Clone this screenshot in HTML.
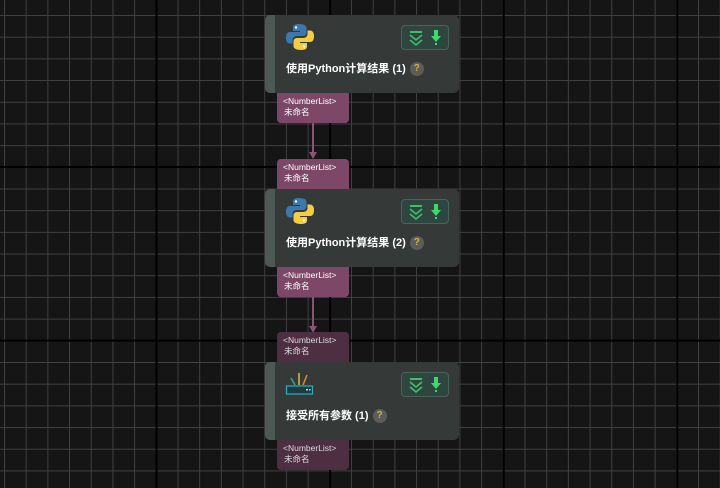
<!DOCTYPE html>
<html><head><meta charset="utf-8"><style>
html,body{margin:0;padding:0}
body{width:720px;height:488px;overflow:hidden;position:relative;background-color:#151515;
background-image:
linear-gradient(to right,#000 0,#000 2px,transparent 2px),
linear-gradient(to bottom,#000 0,#000 2px,transparent 2px),
linear-gradient(to right,#404040 0,#404040 1px,transparent 1px),
linear-gradient(to bottom,#404040 0,#404040 1px,transparent 1px);
background-size:173.6px 173.6px,173.6px 173.6px,21.7px 21.7px,21.7px 21.7px;
background-position:155.5px 0,0 166px,4px 0,0 15px;
font-family:"Liberation Sans","Noto Sans CJK SC",sans-serif;}
.node{position:absolute;left:265px;width:194px;height:78px;background:#353a39;border-radius:5px;overflow:hidden}
.node .strip{position:absolute;left:0;top:0;width:10px;height:100%;background:#4b5a55}
.node .title{position:absolute;left:21px;top:45px;color:#fff;font-size:11px;font-weight:bold;white-space:nowrap}
.help{display:inline-block;width:14px;height:14px;border-radius:50%;background:#5c5c5a;color:#d4b040;font-size:10px;text-align:center;line-height:14px;margin-left:4px;vertical-align:middle;font-weight:bold}
.btns{position:absolute;left:136px;top:10px;width:48px;height:25px;box-sizing:border-box;border:1px solid #486456;background:#2f4640;border-radius:4px}
.icon{position:absolute;left:20px;top:8px}
.tag{position:absolute;left:277px;width:72px;height:30px;background:#7d4868;color:#fff;font-size:8.5px;line-height:11px;box-sizing:border-box;padding:3px 0 0 7px;border-radius:0 0 4px 4px}
.tag.top{border-radius:4px 4px 0 0}
.tag.dim{background:#4e2f42;color:#ddd}
.tag span{display:block;margin-left:-1px}
</style></head><body>

<svg style="position:absolute;left:0;top:0" width="720" height="488">
<line x1="313" y1="123" x2="313" y2="155" stroke="#8a5478" stroke-width="2"/>
<polygon points="309,152 317,152 313,159" fill="#8a5478"/>
<line x1="313" y1="297" x2="313" y2="328" stroke="#8a5478" stroke-width="2"/>
<polygon points="309,326 317,326 313,333" fill="#8a5478"/>
</svg>

<div class="node" style="top:15px"><div class="strip"></div>
<svg class="icon" width="30" height="28" viewBox="0 0 30 28">
<path d="M14 1c-6 0-6 2.5-6 4v3h7v1H5c-3 0-4 2.5-4 6s1.5 5.5 4 5.5h2.5v-3.5c0-2.5 2-4 4.5-4h6c2 0 3.5-1.5 3.5-3.5V5c0-2-2-4-7.5-4z" fill="#3c78aa"/>
<path d="M16 27c6 0 6-2.5 6-4v-3h-7v-1h10c3 0 4-2.5 4-6s-1.5-5.5-4-5.5h-2.5v3.5c0 2.5-2 4-4.5 4h-6c-2 0-3.5 1.5-3.5 3.5V23c0 2 2 4 7.5 4z" fill="#f5cd45"/>
<circle cx="11" cy="4.5" r="1.2" fill="#fff"/><circle cx="19" cy="23.5" r="1.2" fill="#fff"/>
</svg>
<div class="btns"><svg width="46" height="23"><rect x="8" y="5" width="12" height="2" fill="#3fbf6a"/><path d="M8 9l6 5 6-5M8 14l6 5 6-5" stroke="#3fbf6a" stroke-width="1.6" fill="none"/><path d="M32 4h4v6h3l-5 6-5-6h3z" fill="#3fd86a"/><rect x="33" y="17" width="2" height="2" fill="#3fd86a"/></svg></div>
<div class="title">使用Python计算结果 (1)<span class="help">?</span></div>
</div>
<div class="tag" style="top:93px"><span>&lt;NumberList&gt;</span>未命名</div>
<div class="tag top" style="top:159px"><span>&lt;NumberList&gt;</span>未命名</div>

<div class="node" style="top:189px"><div class="strip"></div>
<svg class="icon" width="30" height="28" viewBox="0 0 30 28">
<path d="M14 1c-6 0-6 2.5-6 4v3h7v1H5c-3 0-4 2.5-4 6s1.5 5.5 4 5.5h2.5v-3.5c0-2.5 2-4 4.5-4h6c2 0 3.5-1.5 3.5-3.5V5c0-2-2-4-7.5-4z" fill="#3c78aa"/>
<path d="M16 27c6 0 6-2.5 6-4v-3h-7v-1h10c3 0 4-2.5 4-6s-1.5-5.5-4-5.5h-2.5v3.5c0 2.5-2 4-4.5 4h-6c-2 0-3.5 1.5-3.5 3.5V23c0 2 2 4 7.5 4z" fill="#f5cd45"/>
<circle cx="11" cy="4.5" r="1.2" fill="#fff"/><circle cx="19" cy="23.5" r="1.2" fill="#fff"/>
</svg>
<div class="btns"><svg width="46" height="23"><rect x="8" y="5" width="12" height="2" fill="#3fbf6a"/><path d="M8 9l6 5 6-5M8 14l6 5 6-5" stroke="#3fbf6a" stroke-width="1.6" fill="none"/><path d="M32 4h4v6h3l-5 6-5-6h3z" fill="#3fd86a"/><rect x="33" y="17" width="2" height="2" fill="#3fd86a"/></svg></div>
<div class="title">使用Python计算结果 (2)<span class="help">?</span></div>
</div>
<div class="tag" style="top:267px"><span>&lt;NumberList&gt;</span>未命名</div>
<div class="tag top dim" style="top:332px"><span>&lt;NumberList&gt;</span>未命名</div>

<div class="node" style="top:362px"><div class="strip"></div>
<svg class="icon" width="30" height="28" viewBox="0 0 30 28" style="top:9px">
<line x1="10" y1="14" x2="6" y2="7" stroke="#2aa8a8" stroke-width="1.5"/>
<line x1="14" y1="14" x2="14" y2="2" stroke="#d8c040" stroke-width="1.5"/>
<line x1="18" y1="14" x2="22" y2="4" stroke="#e08a30" stroke-width="1.5"/>
<rect x="1.5" y="15" width="26" height="8" fill="#1e3a44" stroke="#2ab0b8" stroke-width="1.2"/>
<rect x="21" y="18" width="2" height="1.5" fill="#8ee"/><rect x="24" y="18" width="1.5" height="1.5" fill="#8ee"/>
</svg>
<div class="btns"><svg width="46" height="23"><rect x="8" y="5" width="12" height="2" fill="#3fbf6a"/><path d="M8 9l6 5 6-5M8 14l6 5 6-5" stroke="#3fbf6a" stroke-width="1.6" fill="none"/><path d="M32 4h4v6h3l-5 6-5-6h3z" fill="#3fd86a"/><rect x="33" y="17" width="2" height="2" fill="#3fd86a"/></svg></div>
<div class="title">接受所有参数 (1)<span class="help">?</span></div>
</div>
<div class="tag dim" style="top:440px"><span>&lt;NumberList&gt;</span>未命名</div>

</body></html>
